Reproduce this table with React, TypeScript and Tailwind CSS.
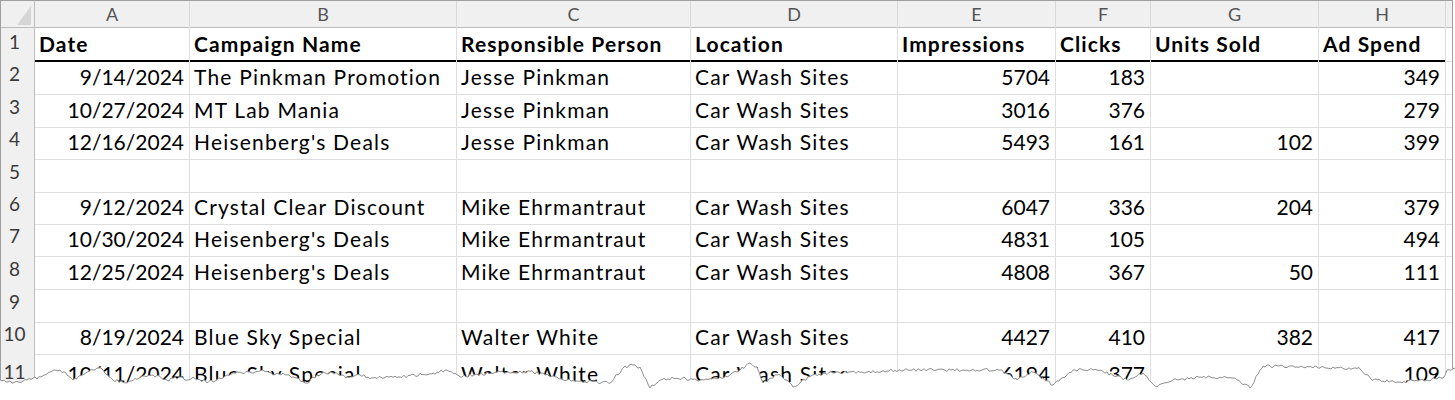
import React from "react";

// column letters, right aligned data columns
const COLS = [
  { key: "A", right: true },
  { key: "B", right: false },
  { key: "C", right: false },
  { key: "D", right: false },
  { key: "E", right: true },
  { key: "F", right: true },
  { key: "G", right: true },
  { key: "H", right: true },
];

const GRID =
  "grid grid-cols-[34px_155px_267px_234px_207px_158px_95px_168px_127px_6px]";

const HEADER = [
  "Date",
  "Campaign Name",
  "Responsible Person",
  "Location",
  "Impressions",
  "Clicks",
  "Units Sold",
  "Ad Spend",
];

const ROWS: string[][] = [
  ["9/14/2024", "The Pinkman Promotion", "Jesse Pinkman", "Car Wash Sites", "5704", "183", "", "349"],
  ["10/27/2024", "MT Lab Mania", "Jesse Pinkman", "Car Wash Sites", "3016", "376", "", "279"],
  ["12/16/2024", "Heisenberg's Deals", "Jesse Pinkman", "Car Wash Sites", "5493", "161", "102", "399"],
  [],
  ["9/12/2024", "Crystal Clear Discount", "Mike Ehrmantraut", "Car Wash Sites", "6047", "336", "204", "379"],
  ["10/30/2024", "Heisenberg's Deals", "Mike Ehrmantraut", "Car Wash Sites", "4831", "105", "", "494"],
  ["12/25/2024", "Heisenberg's Deals", "Mike Ehrmantraut", "Car Wash Sites", "4808", "367", "50", "111"],
  [],
  ["8/19/2024", "Blue Sky Special", "Walter White", "Car Wash Sites", "4427", "410", "382", "417"],
  ["10/11/2024", "Blue Sky Special", "Walter White", "Car Wash Sites", "6194", "377", "303", "109"],
];

const ROW_H = [
  "h-[33px]",
  "h-[32px]",
  "h-[33px]",
  "h-[32px]",
  "h-[32px]",
  "h-[33px]",
  "h-[33px]",
  "h-[32px]",
  "h-[32px]",
  "h-[40px]",
];

// torn paper edge
const ANCHORS: [number, number][] = [
  [0, 380], [13, 383], [27, 380], [40, 377], [50, 372], [60, 370], [67, 375], [73, 380],
  [87, 372], [97, 368], [103, 370], [113, 380], [127, 383], [140, 378], [153, 375],
  [167, 380], [180, 377], [187, 380], [193, 377], [200, 380], [213, 382], [227, 375],
  [240, 372], [253, 373], [263, 370], [273, 375], [283, 373], [293, 377], [307, 383],
  [317, 375], [330, 372], [347, 377], [360, 375], [373, 378], [400, 377], [433, 373],
  [447, 370], [460, 377], [473, 375], [500, 372], [533, 372], [567, 380], [610, 383],
  [623, 368], [633, 365], [640, 367], [650, 388], [660, 380], [673, 378], [700, 380],
  [727, 377], [740, 370], [750, 363], [757, 367], [763, 383], [777, 375], [787, 380],
  [793, 387], [800, 383], [813, 375], [833, 373], [850, 372], [867, 372], [900, 370],
  [933, 370], [967, 370], [1000, 370], [1017, 380], [1033, 372], [1053, 385], [1073, 370],
  [1097, 370], [1127, 380], [1143, 373], [1157, 387], [1173, 380], [1200, 377], [1233, 378],
  [1250, 388], [1263, 366], [1283, 366], [1317, 367], [1360, 369], [1373, 380], [1400, 382],
  [1427, 380], [1443, 378], [1447, 370], [1455, 368],
];

function noise(x: number) {
  const s = Math.sin(x * 12.9898 + 78.233) * 43758.5453;
  return (s - Math.floor(s)) * 3 - 1.5;
}

function tornPoints() {
  const pts: string[] = [];
  for (let i = 0; i < ANCHORS.length - 1; i++) {
    const [x0, y0] = ANCHORS[i];
    const [x1, y1] = ANCHORS[i + 1];
    for (let x = x0; x < x1; x += 2) {
      const t = (x - x0) / (x1 - x0);
      const y = y0 + (y1 - y0) * t + (x === x0 ? 0 : noise(x));
      pts.push(`${x},${y.toFixed(1)}`);
    }
  }
  pts.push("1455,368");
  return pts.join(" ");
}

const EDGE = tornPoints();

export default function App() {
  return (
    <div className="relative w-[1455px] h-[400px] overflow-hidden bg-white font-['Lato','Liberation_Sans',sans-serif] text-black">
      <div className="w-[1453px] border-l border-t border-r border-[#9f9f9f]">
        {/* column letters */}
        <div className={`${GRID} h-[27px] bg-[#f0f0f0] border-b border-[#bdbdbd]`}>
          <div className="flex items-end justify-end pr-[3px] pb-[3px] border-r border-[#bdbdbd]">
            <svg width="14" height="19" viewBox="0 0 14 19">
              <polygon points="14,0 14,19 0,19" fill="#d6d6d6" />
            </svg>
          </div>
          {COLS.map((c) => (
            <div
              key={c.key}
              className="flex items-center justify-center border-r border-[#d9d9d9] text-[18px] text-[#555]"
            >
              {c.key}
            </div>
          ))}
          <div />
        </div>

        {/* header row */}
        <div className={`${GRID} h-[32px]`}>
          <div className="flex items-end justify-center pr-[6px] pb-[4px] bg-[#f0f0f0] border-r border-b border-[#bdbdbd] border-b-[#d9d9d9] text-[19px] text-[#3a3a3a]">
            1
          </div>
          {HEADER.map((h) => (
            <div
              key={h}
              className="flex items-end pl-[4px] pb-[4px] border-r border-[#dedede] border-b-2 border-b-black font-bold text-[21px] leading-[24px] tracking-[1.1px] whitespace-nowrap overflow-hidden"
            >
              {h}
            </div>
          ))}
          <div className="border-b border-[#dedede]" />
        </div>

        {ROWS.map((row, i) => (
          <div key={i} className={`${GRID} ${ROW_H[i]}`}>
            <div className="flex items-end justify-center pr-[6px] pb-[5px] bg-[#f0f0f0] border-r border-b border-[#bdbdbd] border-b-[#d9d9d9] text-[19px] text-[#3a3a3a]">
              {i + 2}
            </div>
            {COLS.map((c, j) => (
              <div
                key={c.key}
                className={`flex items-end pb-[5px] border-r border-b border-[#dedede] text-[21px] leading-[24px] whitespace-nowrap overflow-hidden ${
                  c.right ? "justify-end pr-[5px]" : "pl-[4px] tracking-[1.2px]"
                }`}
              >
                {row[j] ?? ""}
              </div>
            ))}
            <div className="border-b border-[#dedede]" />
          </div>
        ))}
      </div>

      <svg
        className="absolute left-0 top-0 pointer-events-none"
        width="1455"
        height="400"
        viewBox="0 0 1455 400"
      >
        <polygon points={`${EDGE} 1455,400 0,400`} fill="#ffffff" />
        <polyline points={EDGE} fill="none" stroke="#8e8e8e" strokeWidth="1" />
      </svg>
    </div>
  );
}
